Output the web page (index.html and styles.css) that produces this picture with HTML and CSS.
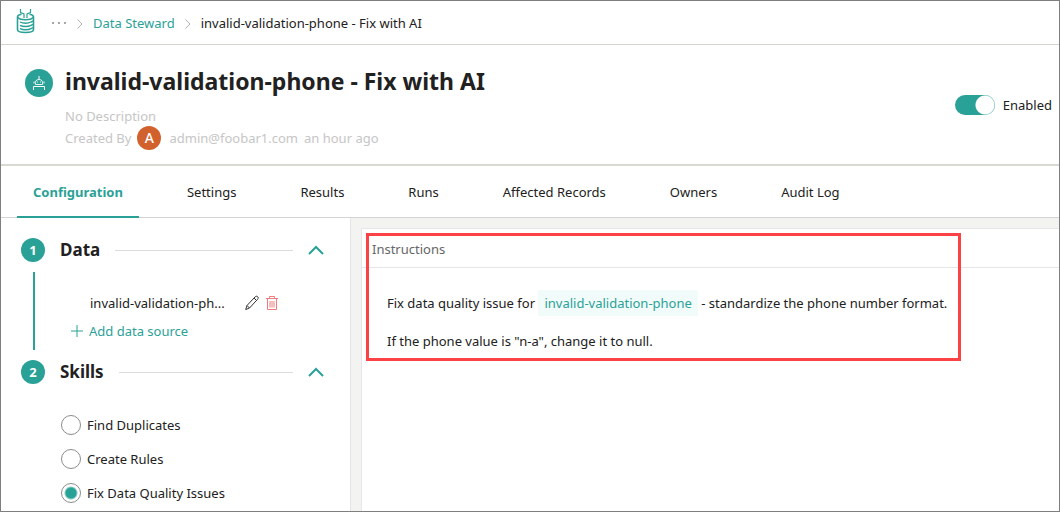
FILE: index.html
```html
<!DOCTYPE html>
<html lang="en">
<head>
<meta charset="utf-8">
<title>invalid-validation-phone - Fix with AI</title>
<link rel="stylesheet" href="styles.css">
</head>
<body>
<div class="app">
  <nav class="breadcrumb" aria-label="Breadcrumb">
    <svg class="logo" width="20" height="26" viewBox="0 0 20 26" fill="none" stroke="currentColor">
      <path d="M4.500 1v3.500L8 6v4M14.500 1v3.500L11 6v4" stroke-width="1.200"/>
      <path d="M5.500 6.300C3 6.800 1.500 7.600 1.500 9v12.500C1.500 23.500 5 24.500 9.500 24.500s8-1 8-3V9c0-1.400-1.500-2.200-4-2.700" stroke-width="1.600"/>
      <path d="M2 9.500c1 1.500 3.500 2.200 7.500 2.200s6.500-.7 7.500-2.200M4 14c1.500.8 3.200 1.200 5.500 1.200s4-.4 5.500-1.200l2-1M4 17.300c1.500.8 3.200 1.200 5.500 1.200s4-.4 5.500-1.200l2-1M4 20.600c1.500.8 3.200 1.200 5.500 1.200s4-.4 5.500-1.200l2-1" stroke-width="1.400"/>
    </svg>
    <button class="more" type="button" aria-label="More levels">
      <svg width="16" height="2" viewBox="0 0 16 2" fill="currentColor"><path d="M1 0h2v2H1zM7 0h2v2H7zM13 0h2v2h-2z"/></svg>
    </button>
    <svg class="sep" width="6" height="10" viewBox="0 0 6 10"><path d="M.5.5 5 5 .5 9.500"/></svg>
    <a class="crumb" href="#">Data Steward</a>
    <svg class="sep" width="6" height="10" viewBox="0 0 6 10"><path d="M.5.5 5 5 .5 9.500"/></svg>
    <span class="current">invalid-validation-phone - Fix with AI</span>
  </nav>

  <header class="header">
    <span class="bot">
      <svg width="14" height="14" viewBox="0 0 14 14" fill="none" stroke="currentColor">
        <path d="M7 0v3M1.500 14v-3.500h11V14"/>
        <path d="M3.500 8.500C2.800 5 4.500 3.500 7 3.500s4.200 1.500 3.500 5zM2 5.500v2M12 5.500v2M5.500 5.500v1M8.500 5.500v1" stroke-width=".9"/>
      </svg>
    </span>
    <div class="heading">
      <h1 class="title">invalid-validation-phone - Fix with AI</h1>
      <p class="meta">No Description</p>
      <p class="meta byline"><span>Created By</span><span class="avatar">A</span><span>admin@foobar1.com</span><span>an hour ago</span></p>
    </div>
    <label class="switch"><input class="switch-input" type="checkbox" role="switch" checked>Enabled</label>
  </header>

  <nav class="tabs" aria-label="Sections">
    <a class="tab active" href="#">Configuration</a>
    <a class="tab" href="#">Settings</a>
    <a class="tab" href="#">Results</a>
    <a class="tab" href="#">Runs</a>
    <a class="tab" href="#">Affected Records</a>
    <a class="tab" href="#">Owners</a>
    <a class="tab" href="#">Audit Log</a>
  </nav>

  <main class="workspace">
    <aside class="sidebar">
      <section class="step">
        <div class="step-head">
          <span class="number">1</span>
          <h2 class="step-title">Data</h2>
          <span class="rule"></span>
          <button class="collapse" type="button" aria-label="Collapse Data">
            <svg width="16" height="10" viewBox="0 0 16 10"><path d="M1 9 8 2 15 9"/></svg>
          </button>
        </div>
        <div class="step-body">
          <div class="source">
            <span class="source-name">invalid-validation-ph...</span>
            <button class="icon-btn" type="button" aria-label="Edit">
              <svg width="14" height="16" viewBox="0 0 14 16" fill="none" stroke="currentColor"><path d="M.7 14.500 2 10.500 10 2c1-1 2-1 2.700-.3s.7 1.700-.2 2.700L4.500 13zM9 3l2.500 2.500M2 10.500 4.500 13"/></svg>
            </button>
            <button class="icon-btn danger" type="button" aria-label="Delete">
              <svg width="12" height="14" viewBox="0 0 12 14" fill="none" stroke="currentColor"><path d="M0 2.500h12M3.500 2.500v-2h5v2M1.500 2.500v11h9v-11M4 5v6.500M6 5v6.500M8 5v6.500"/></svg>
            </button>
          </div>
          <button class="add" type="button">
            <svg width="12" height="12" viewBox="0 0 12 12" fill="none" stroke="currentColor"><path d="M6 0v12M0 6h12"/></svg>
            Add data source
          </button>
        </div>
      </section>
      <section class="step">
        <div class="step-head">
          <span class="number">2</span>
          <h2 class="step-title">Skills</h2>
          <span class="rule"></span>
          <button class="collapse" type="button" aria-label="Collapse Skills">
            <svg width="16" height="10" viewBox="0 0 16 10"><path d="M1 9 8 2 15 9"/></svg>
          </button>
        </div>
        <div class="options">
          <label class="option"><input class="radio" type="radio" name="skill">Find Duplicates</label>
          <label class="option"><input class="radio" type="radio" name="skill">Create Rules</label>
          <label class="option"><input class="radio" type="radio" name="skill" checked>Fix Data Quality Issues</label>
        </div>
      </section>
    </aside>

    <div class="canvas">
      <section class="card">
        <h2 class="card-title">Instructions</h2>
        <div class="card-body">
          <p class="line">Fix data quality issue for <span class="tag">invalid-validation-phone</span> - standardize the phone number format.</p>
          <p class="line">If the phone value is "n-a", change it to null.</p>
        </div>
        <div class="highlight"></div>
      </section>
    </div>
  </main>
</div>
</body>
</html>
```
FILE: styles.css
```css
* { box-sizing: border-box; }

body {
  margin: 0;
  font: 13px/20px "Noto Sans", "Open Sans", sans-serif;
  color: #212121;
  background: #fff;
}

h1, h2, p { margin: 0; }
a { color: inherit; text-decoration: none; }

button {
  display: flex;
  align-items: center;
  padding: 0;
  border: 0;
  background: none;
  font: inherit;
  color: inherit;
}

svg { display: block; flex: none; }

.app {
  display: flex;
  flex-direction: column;
  min-height: 100vh;
  border: 1px solid #7f7f7f;
}

.breadcrumb {
  display: flex;
  align-items: center;
  height: 44px;
  padding-left: 15px;
  border-bottom: 1px solid #d4d4d0;
}
.logo { color: #2aa197; margin-bottom: 4px; }
.more { margin-left: 15px; color: #a8a8a8; }
.sep {
  margin: 2px 10px 0;
  fill: none;
  stroke: #b0b0b0;
}
.crumb { color: #2aa197; }

.header {
  display: flex;
  align-items: flex-start;
  height: 121px;
  padding: 19px 7px 0 24px;
  border-bottom: 2px solid #d6dad2;
}
.bot {
  display: grid;
  place-items: center;
  width: 28px;
  height: 28px;
  margin-top: 5px;
  border-radius: 50%;
  background: #2aa197;
  color: #fff;
}
.heading { flex: 1; margin-left: 12px; }
.title {
  margin-bottom: 8px;
  font-size: 23px;
  line-height: 34px;
  font-weight: 700;
}
.meta { color: #c6c6c6; line-height: 20px; }
.byline { display: flex; align-items: center; gap: 6px; line-height: 24px; }
.avatar {
  width: 24px;
  height: 24px;
  margin-right: 2px;
  border-radius: 50%;
  background: #d2622d;
  color: #fff;
  font-size: 14px;
  font-weight: 500;
  text-align: center;
}
.switch {
  display: flex;
  align-items: center;
  gap: 8px;
  margin-top: 31px;
}
.switch-input {
  appearance: none;
  width: 40px;
  height: 20px;
  margin: 0;
  border-radius: 10px;
  background: radial-gradient(circle at 30px 10px, #fff 9px, #2aa197 10px);
}

.tabs {
  display: flex;
  gap: 32px;
  height: 52px;
  padding-left: 16px;
  border-bottom: 1px solid #d4d4d4;
}
.tab {
  height: 52px;
  padding: 0 16px;
  line-height: 52px;
}
.active {
  border-bottom: 2px solid #2aa197;
  color: #2aa197;
  font-weight: 700;
}

.workspace { display: flex; flex: 1; }

.sidebar {
  width: 350px;
  padding: 20px 26px 0 20px;
  border-right: 1px solid #e4e4ea;
}
.step-head { display: flex; align-items: center; height: 24px; }
.number {
  width: 24px;
  height: 24px;
  border-radius: 50%;
  background: #2aa197;
  color: #fff;
  font-weight: 700;
  line-height: 24px;
  text-align: center;
}
.step-title {
  margin: 0 15px;
  font-size: 17px;
  line-height: 24px;
  font-weight: 700;
}
.rule { flex: 1; height: 1px; background: #dcdcdc; }
.collapse { margin-left: 15px; }
.collapse path { fill: none; stroke: #2aa197; stroke-width: 2; }

.step-body {
  height: 78px;
  margin: 10px 0 10px 12px;
  padding: 21px 0 0 36px;
  border-left: 2px solid #2aa197;
}
.source { display: flex; align-items: center; padding-left: 19px; }
.source-name { width: 155px; white-space: nowrap; }
.icon-btn { margin-right: 7px; color: #333; }
.danger { color: #ef7d7d; }
.add { gap: 6px; margin-top: 8px; color: #2aa197; }

.options { padding: 31px 0 8px 40px; }
.option {
  display: flex;
  align-items: center;
  gap: 6px;
  height: 20px;
  margin-bottom: 14px;
}
.option:last-child { margin-bottom: 0; }
.radio {
  appearance: none;
  width: 20px;
  height: 20px;
  margin: 0;
  border: 1px solid #8c8c8c;
  border-radius: 50%;
}
.radio:checked { background: radial-gradient(circle, #2aa197 5px, #fff 7px); }

.canvas {
  display: flex;
  flex: 1;
  padding: 10px 0 0 10px;
  background: #f3f3f1;
}
.card {
  position: relative;
  flex: 1;
  border: solid #e6e6ea;
  border-width: 1px 0 0 1px;
  background: #fff;
}
.card-title {
  padding: 10px 10px 8px;
  border-bottom: 1px solid #e6e6ea;
  color: #666;
  font-size: 13px;
  line-height: 20px;
  font-weight: 400;
}
.card-body { padding: 22px 25px; }
.line { margin-bottom: 12px; line-height: 26px; }
.tag {
  display: inline-block;
  padding: 0 6px;
  border-radius: 2px;
  background: #f1fbfa;
  color: #2aa197;
}
.highlight {
  position: absolute;
  top: 4px;
  left: 4px;
  width: 595px;
  height: 128px;
  border: 3px solid #fc4245;
  pointer-events: none;
}
```
